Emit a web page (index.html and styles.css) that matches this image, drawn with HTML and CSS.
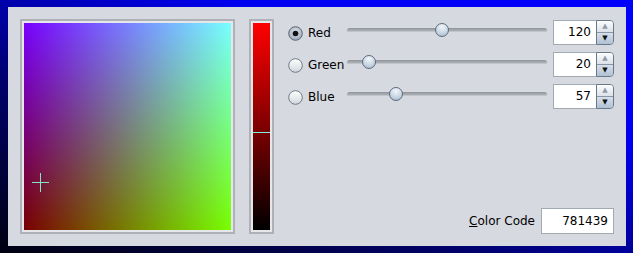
FILE: index.html
```html
<!DOCTYPE html>
<html>
<head>
<meta charset="utf-8">
<link rel="stylesheet" href="styles.css">
</head>
<body>
<div class="panel">
  <div class="frame square-frame">
    <div class="square">
      <div class="cross" style="left:8px;top:150px">
        <span class="ch"></span><span class="cv"></span>
      </div>
    </div>
  </div>
  <div class="frame bar-frame">
    <div class="bar">
      <span class="bar-cursor" style="top:109px"></span>
    </div>
  </div>
  <div class="controls">
    <div class="rows">
      <div class="row">
        <label class="radio">
          <svg width="15" height="15" viewBox="0 0 15 15"><defs><radialGradient id="sel" cx="50%" cy="40%" r="60%"><stop offset="0" stop-color="#e4e9ef"/><stop offset="1" stop-color="#9aa6b5"/></radialGradient></defs><circle cx="7.5" cy="7.5" r="6.8" fill="url(#sel)" stroke="#5b6673" stroke-width="1"/><circle cx="7.5" cy="7.5" r="2.8" fill="#111"/></svg>
          <span>Red</span>
        </label>
        <div class="slider"><span class="track"></span><span class="thumb" style="left:88px"></span></div>
        <div class="spinner"><span class="field">120</span><span class="btns"><span class="up">▲</span><span class="down">▼</span></span></div>
      </div>
      <div class="row">
        <label class="radio">
          <svg width="15" height="15" viewBox="0 0 15 15"><defs><linearGradient id="off" x1="0" y1="0" x2="0" y2="1"><stop offset="0" stop-color="#ffffff"/><stop offset="1" stop-color="#d2d7de"/></linearGradient></defs><circle cx="7.5" cy="7.5" r="6.8" fill="url(#off)" stroke="#6f7a86" stroke-width="1"/></svg>
          <span>Green</span>
        </label>
        <div class="slider"><span class="track"></span><span class="thumb" style="left:15px"></span></div>
        <div class="spinner"><span class="field">20</span><span class="btns"><span class="up">▲</span><span class="down">▼</span></span></div>
      </div>
      <div class="row">
        <label class="radio">
          <svg width="15" height="15" viewBox="0 0 15 15"><circle cx="7.5" cy="7.5" r="6.8" fill="url(#off)" stroke="#6f7a86" stroke-width="1"/></svg>
          <span>Blue</span>
        </label>
        <div class="slider"><span class="track"></span><span class="thumb" style="left:42px"></span></div>
        <div class="spinner"><span class="field">57</span><span class="btns"><span class="up">▲</span><span class="down">▼</span></span></div>
      </div>
    </div>
    <div class="code-row">
      <span class="code-label"><u>C</u>olor Code</span>
      <span class="code-field">781439</span>
    </div>
  </div>
</div>
</body>
</html>
```
FILE: styles.css
```css
html, body {
  margin: 0;
  padding: 0;
}
body {
  width: 633px;
  height: 253px;
  overflow: hidden;
  background: linear-gradient(200deg, #0000ff 0%, #0000f0 30%, #00006a 65%, #000010 100%);
  font-family: "DejaVu Sans", sans-serif;
  font-size: 12px;
  color: #000;
}
.panel {
  box-sizing: border-box;
  margin: 7px 7px 0 8px;
  width: 618px;
  height: 239px;
  background: #d6d9df;
  padding: 12px;
  display: flex;
}
.frame {
  box-sizing: border-box;
  height: 215px;
  border: 2px solid #aeb1b6;
  background: #e6e7ea;
  padding: 2px;
}
.square-frame {
  width: 215px;
  flex: none;
}
.square {
  position: relative;
  width: 207px;
  height: 207px;
  background-color: rgb(120, 0, 0);
  background-image: linear-gradient(to right, #000000, #00ff00), linear-gradient(to top, #000000, #0000ff);
  background-blend-mode: lighten;
}
.cross {
  position: absolute;
  width: 17px;
  height: 19px;
}
.ch {
  position: absolute;
  left: 0;
  top: 9px;
  width: 17px;
  height: 1px;
  background: #7fe6c8;
}
.cv {
  position: absolute;
  left: 8px;
  top: 0;
  width: 1px;
  height: 19px;
  background: #7fe6c8;
}
.bar-frame {
  width: 25px;
  flex: none;
  margin-left: 14px;
}
.bar {
  position: relative;
  width: 17px;
  height: 207px;
  background: linear-gradient(to bottom, #ff0000, #000000);
}
.bar-cursor {
  position: absolute;
  left: 0;
  width: 17px;
  height: 1px;
  background: #7ff0e8;
}
.controls {
  margin-left: 14px;
  width: 326px;
  flex: none;
  display: flex;
  flex-direction: column;
}
.rows {
  padding-top: 1px;
  display: flex;
  flex-direction: column;
  gap: 7px;
}
.row {
  height: 25px;
  display: grid;
  grid-template-columns: 59px 200px 67px;
  column-gap: 0;
  align-items: center;
}
.radio {
  display: flex;
  align-items: center;
  gap: 5px;
  padding-top: 1px;
}
.radio svg {
  display: block;
}
.slider {
  position: relative;
  height: 25px;
  margin-top: -4px;
}
.track {
  position: absolute;
  left: 0;
  right: 0;
  top: 10px;
  height: 5px;
  border-radius: 3px;
  background: linear-gradient(to bottom, #8f949b 0%, #a9adb3 50%, #e2e4e8 100%);
}
.thumb {
  position: absolute;
  top: 5px;
  width: 14px;
  height: 14px;
  box-sizing: border-box;
  border-radius: 50%;
  border: 1px solid #5a6c80;
  background: radial-gradient(circle at 50% 25%, #f2f6fa 0%, #cad7e4 55%, #9fb3c8 100%);
}
.spinner {
  display: flex;
  height: 25px;
  margin-left: 6px;
}
.field {
  flex: none;
  box-sizing: border-box;
  width: 43px;
  height: 25px;
  background: #fff;
  border: 1px solid #a3a9b1;
  border-right: none;
  text-align: right;
  padding-right: 5px;
  line-height: 23px;
  font-size: 12px;
}
.btns {
  flex: none;
  box-sizing: border-box;
  width: 18px;
  height: 25px;
  display: flex;
  flex-direction: column;
  border: 1px solid #69788a;
  border-radius: 0 4px 4px 0;
  overflow: hidden;
  font-size: 7px;
  text-align: center;
}
.up {
  flex: 1;
  background: linear-gradient(to bottom, #fbfcfd, #dde2e8);
  color: #8f99a5;
  line-height: 11px;
  border-bottom: 1px solid #8996a6;
}
.down {
  flex: 1;
  background: linear-gradient(to bottom, #d7e0ea, #b1c1d3);
  color: #111;
  line-height: 11px;
}
.code-row {
  margin-top: auto;
  display: flex;
  justify-content: flex-end;
  align-items: center;
  gap: 6px;
}
.code-label {
  font-size: 12px;
}
.code-field {
  box-sizing: border-box;
  width: 73px;
  height: 26px;
  background: #fff;
  border: 1px solid #a3a9b1;
  text-align: right;
  padding-right: 5px;
  line-height: 24px;
  font-size: 12px;
}
```
